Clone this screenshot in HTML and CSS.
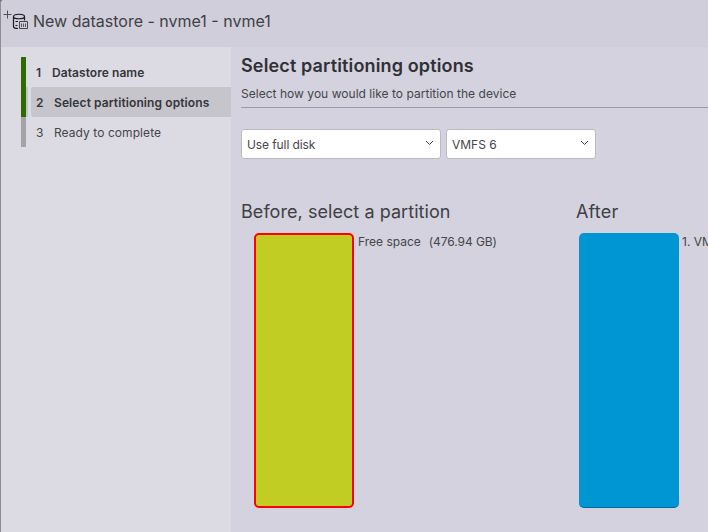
FILE: index.html
```html
<!DOCTYPE html>
<html lang="en">
<head>
<meta charset="utf-8">
<title>New datastore</title>
<link rel="stylesheet" href="styles.css">
</head>
<body>
<div class="wizard">
  <header class="titlebar">
    <svg class="icon" width="26" height="24" viewBox="0 0 26 24" fill="none" stroke="#1c1c20" stroke-width="1">
      <path d="M0.500 6.500h8M4.500 2.500v8" stroke="#505056"/>
      <path d="M10.500 8.500C10.500 5.500 21.500 5.500 21.500 8.500S10.500 11.500 10.500 8.500V18.500C10.500 19.700 12 20.500 15 20.500M21.500 8.500V12.500" stroke-width="1.200"/>
      <path d="M12.500 13.500h2.500M12.500 17.500h2"/>
      <path d="M16.500 13.500h8v7h-8z" stroke="#44444a"/>
      <path d="M18.500 15.500v3.500M20.500 15.500v3.500M22.500 15.500v3.500" stroke="#55555b"/>
    </svg>
    <h1 class="title">New datastore - nvme1 - nvme1</h1>
  </header>
  <div class="body">
    <nav class="steps">
      <ol class="list">
        <li class="step done"><span class="num">1</span><span class="name first">Datastore name</span></li>
        <li class="step done current"><span class="num">2</span><span class="name second">Select partitioning options</span></li>
        <li class="step"><span class="num">3</span><span class="name third">Ready to complete</span></li>
      </ol>
    </nav>
    <main class="content">
      <h2 class="heading">Select partitioning options</h2>
      <p class="sub"><span>Select how you would like to partition the device</span></p>
      <div class="fields">
        <div class="select disk"><span>Use full disk</span><svg width="9" height="6" viewBox="0 0 9 6" fill="none" stroke="#444"><path d="M1 1l3.500 3.500L8 1"/></svg></div>
        <div class="select vmfs"><span>VMFS 6</span><svg width="9" height="6" viewBox="0 0 9 6" fill="none" stroke="#444"><path d="M1 1l3.500 3.500L8 1"/></svg></div>
      </div>
      <div class="layouts">
        <section class="before">
          <h3><span>Before, select a partition</span></h3>
          <div class="disk-row"><div class="block free"></div><span class="label">Free space</span><span class="size">(476.94 GB)</span></div>
        </section>
        <section class="after">
          <h3><span>After</span></h3>
          <div class="disk-row"><div class="block used"></div><span class="label">1. VM</span></div>
        </section>
      </div>
    </main>
  </div>
</div>
</body>
</html>
```
FILE: styles.css
```css
* { box-sizing: border-box; }
body { margin: 0; background: #77777b; overflow: hidden; font: 12px/18px Inter, "Liberation Sans", sans-serif; color: #454549; }
h1, h2, h3, p, ol { margin: 0; padding: 0; font-weight: 400; }
.wizard { width: 708px; height: 532px; border-left: 1px solid #8d8d92; border-top-left-radius: 4px; background: #d3d2de; overflow: hidden; white-space: nowrap; display: flex; flex-direction: column; }
.titlebar { height: 47px; background: #cfceda; display: flex; padding: 8px 0 0 2px; }
.icon { flex: none; }
.title { font-size: 16px; line-height: 27px; margin-left: 4px; color: #414145; }
.body { flex: 1; display: flex; }
.steps { width: 230px; flex: none; background: #dcdbe4; padding: 10px 0 0 20px; }
.list { list-style: none; }
.step { height: 30px; line-height: 31px; display: flex; border-left: 5px solid #a3a3a8; padding-left: 10px; }
.done { border-color: #306b00; font-weight: 600; color: #35353a; }
.current { padding-left: 5px; background: linear-gradient(90deg, #c5c5cb 2px, transparent 2px); }
.current .num { background: #c5c5cb; border-radius: 3px 0 0 3px; padding-left: 5px; width: 23px; }
.current .name { background: #c5c5cb; flex: 1; }
.num { width: 18px; flex: none; }
.first { letter-spacing: 0.06px; }
.second { letter-spacing: 0.1px; }
.third { letter-spacing: 0.07px; }
.step:first-child .num { width: 16px; }
.content { flex: 1; min-width: 0; padding: 8px 0 0 10px; }
.heading { font-size: 18px; line-height: 22px; font-weight: 600; letter-spacing: 0.14px; color: #303035; }
.sub { height: 31px; line-height: 33px; letter-spacing: 0.03px; border-bottom: 1px solid #9a9aa8; }
.fields { display: flex; gap: 5px; margin-top: 21px; }
.select { height: 30px; background: #fff; border: 1px solid #bcbcc0; border-radius: 3px; display: flex; align-items: center; justify-content: space-between; padding: 0 6px 0 5px; }
.select span { padding-top: 1px; }
.disk span { letter-spacing: -0.1px; }
.select svg { position: relative; top: -1px; }
.disk { width: 200px; }
.vmfs { width: 150px; }
.layouts { display: flex; margin-top: 40px; }
.before { width: 335px; flex: none; }
h3 { font-size: 18px; line-height: 25px; height: 34px; letter-spacing: 0.06px; color: #404044; }
.disk-row { display: flex; line-height: 17px; }
.block { width: 100px; height: 275px; border-radius: 5px; flex: none; }
.free { margin-left: 13px; background: #c1cd23; border: 2px solid #f00; }
.used { margin-left: 3px; background: #0095d3; border-bottom: 1px solid #006a9c; }
.label { margin-left: 4px; }
.used + .label { margin-left: 3px; }
.size { margin-left: 8px; letter-spacing: -0.08px; }
.after h3 { letter-spacing: 0.2px; }
```
